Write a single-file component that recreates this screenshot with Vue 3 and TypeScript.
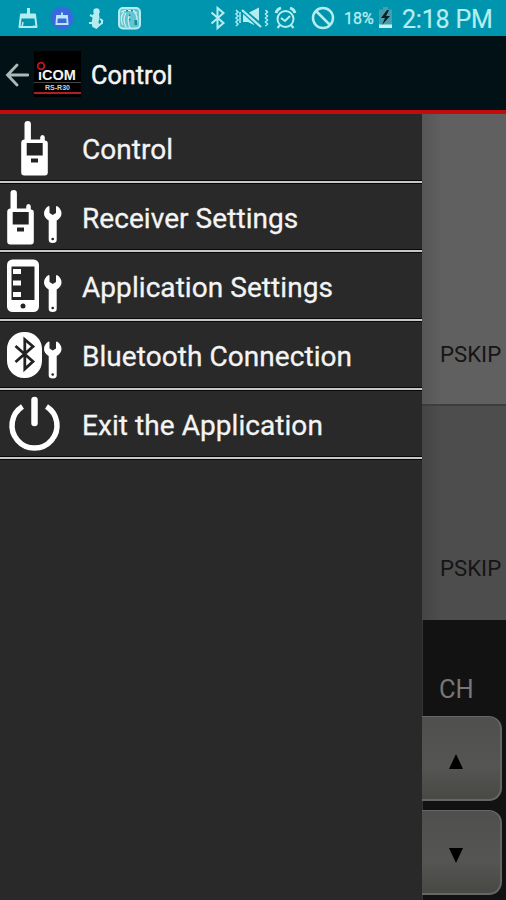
<script setup lang="ts">
type IconName = 'radio' | 'receiver' | 'application' | 'bluetooth' | 'power'

interface MenuItem {
  label: string
  icon: IconName
}

const items: MenuItem[] = [
  { label: 'Control', icon: 'radio' },
  { label: 'Receiver Settings', icon: 'receiver' },
  { label: 'Application Settings', icon: 'application' },
  { label: 'Bluetooth Connection', icon: 'bluetooth' },
  { label: 'Exit the Application', icon: 'power' },
]

const hasWrench = (name: IconName): boolean =>
  name === 'receiver' || name === 'application' || name === 'bluetooth'
</script>

<template>
  <div class="screen">
    <header class="status">
      <svg class="notices" width="150" height="36" viewBox="0 0 150 36">
        <g fill="none" stroke="#b4edf0" stroke-width="2" stroke-linejoin="round">
          <path d="M21 14.500h14l1.500 12.500h-17z" />
          <path d="M20.500 16.500h15" stroke-width="4" />
          <path d="M28.500 8v6" stroke-width="3" />
          <path d="M23 22l-1 5M33.500 25.500l1 1.500" stroke-width="1.500" />
        </g>
        <circle cx="62" cy="18" r="11.300" fill="#3969dc" />
        <path d="M57 16h10l.6 8H56.400zM62 12.500V16" fill="none" stroke="#bce8f4" stroke-width="1.800" />
        <path d="M57 17.500h10" stroke="#bce8f4" stroke-width="2" />
        <g fill="#b4edf0">
          <circle cx="96.500" cy="11.500" r="3.200" />
          <path d="M93 14h6l.5 4-1 4 1 4-3 3-4-2-1-4 1-5z" />
          <path d="M94 17l-4-2M92 23h-3M98 26l4-3v-3M100 19l3 2" fill="none" stroke="#b4edf0" stroke-width="2" />
        </g>
        <rect x="119" y="8" width="21" height="20.500" rx="4" fill="#66c4d1" stroke="#b4edf0" stroke-width="2" />
        <g fill="none" stroke="#c3f1f2" stroke-width="1.200">
          <path d="M123 25q-4-7 1-13M126 27q-4-8 0-14M130 28q-3-7-1-12M133 10q6 6 3 15M121 12q7-4 16 1" />
        </g>
        <path d="M126 10h2v1.500h-2zM131 10h2v1.500h-2zM129 14.500h1.500v1.500H129zM129 19h1.500v1.500H129zM134.500 20h2.500v5h-2.500z" fill="#168b9d" />
      </svg>
      <svg class="signals" width="134" height="36" viewBox="206 0 134 36">
        <g fill="none" stroke="#b4edf0" stroke-width="2">
          <path d="M211.500 12.500l12 10.500-6 5V8l6 5-12 10.500" />
          <path d="M236 10l2 2-2 2 2 2-2 2 2 2-2 2 2 2-2 2M240 12v11M265.500 10l2 2-2 2 2 2-2 2 2 2-2 2 2 2-2 2" stroke-width="1.500" />
          <path d="M242 10l19 17" stroke-width="2.200" />
          <circle cx="285.500" cy="19" r="8" />
          <path d="M281 18l4 3 5-5" />
          <path d="M276 13q1-4 5-5M290 8q4 1 5 5" stroke-width="2.800" />
          <path d="M280 25l-2.500 3M291 25l2.500 3" />
          <circle cx="323" cy="18" r="10" stroke-width="2.500" />
          <path d="M316 11l14 14" stroke-width="2.500" />
        </g>
        <path d="M243 14l11 10v1l-6-3h-5zM249 12.500l10-5v13.500z" fill="#b4edf0" />
      </svg>
      <span class="percent">18%</span>
      <svg class="battery" width="15" height="24" viewBox="0 0 15 24">
        <path d="M5 1h5v2.500h4V22H1V3.500h4z" fill="#479eaa" />
        <path d="M1 18.500h13V22H1z" fill="#c3f3f3" />
        <path d="M9 4L3 12h4l-3 7 8-9H8l3-6z" fill="#07202a" />
      </svg>
      <span class="clock">2:18 PM</span>
    </header>

    <div class="toolbar">
      <svg class="back" width="24" height="24" viewBox="0 0 24 24">
        <path d="M12 2L2.500 12 12 22M3 12h20" fill="none" stroke="#abb9ba" stroke-width="2.800" stroke-linecap="round" />
      </svg>
      <div class="logo">
        <svg class="ring" width="10" height="10" viewBox="0 0 10 10">
          <circle cx="5" cy="5" r="3.300" fill="none" stroke="#c41624" stroke-width="1.700" />
        </svg>
        <span class="brand">ıCOM</span>
        <span class="model">RS-R30</span>
      </div>
      <h1 class="title">Control</h1>
    </div>

    <main class="content">
      <nav class="drawer">
        <a v-for="item in items" :key="item.label" class="item">
          <svg class="icon" width="82" height="66" viewBox="0 0 82 66" fill="#fff">
            <g v-if="item.icon === 'radio' || item.icon === 'receiver'" :transform="item.icon === 'radio' ? 'translate(14 0)' : ''">
              <path d="M10.500 25.500V10q0-3 3.200-3t3.200 3v15.500h9.300v-2q0-2.500 2.300-2.500t2.300 2.500v3q3 0 3 3V58.500q0 3-3 3H10.200q-3 0-3-3V29q0-3.500 3.300-3.500z" />
              <path d="M12.700 29h16v12.500h-16zM17 44.500h7v4h-7z" fill="#222" />
            </g>
            <g v-else-if="item.icon === 'application'">
              <rect x="7" y="7.500" width="32" height="52.500" rx="5.500" />
              <path d="M11.500 14.500h23V48h-23z" fill="#252525" />
              <path d="M13 17h8v5h-8zM13 28.500h8v5h-8zM13 40h8v5h-8z" />
              <circle cx="23" cy="54" r="2.500" fill="#222" />
            </g>
            <g v-else-if="item.icon === 'bluetooth'">
              <rect x="7" y="11" width="35" height="46" rx="17" />
              <path d="M15.500 25L33 40.500l-8.200 7.500V18.500L33 25.500 15.500 41" fill="none" stroke="#222" stroke-width="2.800" />
            </g>
            <g v-else fill="none" stroke="#fff" stroke-width="5.500">
              <path d="M22.500 16.500a22.500 22.500 0 1 0 24 0" />
              <path d="M34.500 10v23" stroke-width="6.500" stroke-linecap="round" />
            </g>
            <g v-if="hasWrench(item.icon)" :transform="item.icon === 'bluetooth' ? 'translate(0 -2.500)' : ''">
              <path d="M48.500 23q-4.500 3-4.500 7.500 0 4 4.700 7V57q0 3 4 3t4-3V37.500q4.800-3 4.800-7 0-4.500-4.500-7.500l-1 .5V30l-3.200 2L49.500 30v-6.500z" />
              <circle cx="52.700" cy="56" r="1.300" fill="#222" />
            </g>
          </svg>
          <span class="label">{{ item.label }}</span>
        </a>
      </nav>

      <section class="control">
        <div class="channel active"><span>PSKIP</span></div>
        <div class="channel"><span>PSKIP</span></div>
        <div class="keypad">
          <span class="ch">CH</span>
          <button class="key" type="button" aria-label="Up">
            <svg width="14" height="15" viewBox="0 0 14 15"><path d="M7 0l7 15H0z" /></svg>
          </button>
          <button class="key" type="button" aria-label="Down">
            <svg width="14" height="15" viewBox="0 0 14 15"><path d="M0 0h14L7 15z" /></svg>
          </button>
        </div>
      </section>
    </main>
  </div>
</template>

<style>
body {
  margin: 0;
  background: #292929;
}
</style>

<style scoped>
.screen {
  width: 506px;
  height: 900px;
  display: flex;
  flex-direction: column;
  overflow: hidden;
  font-family: Roboto, "Liberation Sans", sans-serif;
  color: #f4f4f4;
}
.status {
  height: 36px;
  flex: none;
  display: flex;
  align-items: center;
  background: #0095ae;
  color: #b4edf0;
  white-space: nowrap;
}
.signals {
  margin-left: 56px;
}
.percent {
  width: 35px;
  margin-left: 4px;
  font-size: 16px;
  line-height: 36px;
  padding-top: 2px;
  -webkit-text-stroke: 0.3px;
}
.battery {
  margin-left: -1px;
}
.clock {
  margin-left: 9px;
  padding-top: 3px;
  font-size: 25px;
  line-height: 34px;
  letter-spacing: -0.2px;
  -webkit-text-stroke: 0.2px;
}
.toolbar {
  box-sizing: border-box;
  height: 78px;
  flex: none;
  display: flex;
  align-items: center;
  padding-left: 5px;
  background: #011116;
  border-bottom: 4px solid #c20c0b;
}
.back {
  margin-top: 3px;
}
.logo {
  width: 47px;
  height: 46px;
  margin: 2px 0 0 5px;
  display: flex;
  flex-direction: column;
  background: #000;
  overflow: hidden;
}
.ring {
  flex: none;
  margin: 10px 0 0 2px;
}
.brand {
  height: 12px;
  margin: -2px 0 0 4px;
  font: 700 14.5px/12px "Liberation Sans", sans-serif;
}
.model {
  height: 9px;
  margin-top: 1px;
  border-top: 1px solid #454545;
  border-bottom: 2px solid #b21c25;
  text-align: center;
  font: 700 7px/10px "Liberation Sans", sans-serif;
  color: #d0d0d0;
}
.title {
  margin: 6px 0 0 10px;
  font-size: 25.2px;
  line-height: 32px;
  font-weight: 400;
  -webkit-text-stroke: 0.5px;
}
.content {
  flex: 1;
  min-height: 0;
  display: flex;
}
.drawer {
  width: 422px;
  flex: none;
  background: #292929;
}
.item {
  height: 69px;
  box-sizing: border-box;
  display: flex;
  align-items: flex-start;
  border-bottom: 2px solid #c8c6c6;
  box-shadow: inset 0 -1px #080808, 0 1px #080808;
}
.icon {
  flex: none;
}
.label {
  padding-top: 2px;
  font-size: 28px;
  line-height: 68px;
  letter-spacing: 0.06px;
  white-space: nowrap;
  -webkit-text-stroke: 0.3px;
}
.control {
  flex: 1;
  min-width: 0;
  display: flex;
  flex-direction: column;
  background: #121212;
  box-shadow: inset 1px 0 #333;
}
.channel {
  box-sizing: border-box;
  height: 214px;
  flex: none;
  display: flex;
  align-items: flex-end;
  padding: 0 0 37px 18px;
  background: linear-gradient(90deg, #454545, #4d4d4d 20px);
  color: #151515;
  font-size: 22.2px;
  line-height: 30px;
}
.channel.active {
  height: 292px;
  padding-bottom: 35px;
  border-bottom: 2px solid #3d3d3d;
  background: linear-gradient(90deg, #565656, #606060 20px);
}
.keypad {
  display: flex;
  flex-direction: column;
  gap: 9px;
}
.ch {
  height: 40px;
  padding: 47px 0 0 17px;
  font-size: 25.5px;
  line-height: 44px;
  color: #777;
}
.key {
  box-sizing: border-box;
  width: 80px;
  height: 85px;
  display: flex;
  align-items: center;
  justify-content: center;
  padding: 6px 11px 0 0;
  border: 0 solid #666;
  border-width: 1px 2px 2px 0;
  border-radius: 0 13px 13px 0;
  background: linear-gradient(#4f4f4e, #555553 60%, #484845);
}
</style>
